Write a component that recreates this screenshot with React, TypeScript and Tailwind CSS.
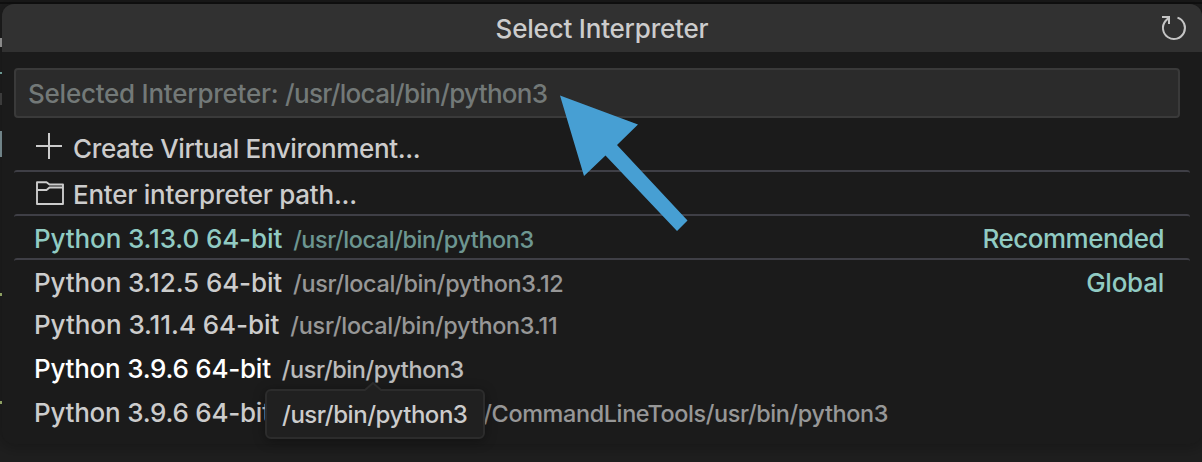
import { ReactNode } from "react";

type Item = {
  label: string;
  description?: string;
  icon?: ReactNode;
  tag?: string;
  tagClass?: string;
  separator?: boolean;
  rowClass: string;
  labelClass: string;
  descriptionClass?: string;
};

function PlusIcon() {
  return (
    <svg className="mr-[10px] h-[28px] w-[29px] shrink-0 overflow-visible" viewBox="0 0 29 28" fill="none" stroke="#cccccc" strokeWidth="2">
      <path d="M2 11h26M15 -2v26" />
    </svg>
  );
}

function FolderIcon() {
  return (
    <svg className="mr-[8px] h-[28px] w-[31px] shrink-0 overflow-visible" viewBox="0 0 31 28" fill="none" stroke="#cccccc" strokeWidth="1.9" strokeLinejoin="round">
      <path d="M3 1.300h9.500l3 2.200h13.500v19.500h-26z M3 9h9.500l3 -2.500h13.500" />
    </svg>
  );
}

function RefreshIcon() {
  return (
    <svg className="h-[28px] w-[28px]" viewBox="0 0 28 28" fill="none" stroke="#c5c5c5" strokeWidth="2">
      <path d="M17.500 3.600A11 11 0 1 1 5.500 7L9 3.500" />
      <path d="M2 3H9V10" />
    </svg>
  );
}

const items: Item[] = [
  { label: "Create Virtual Environment...", icon: <PlusIcon />, rowClass: "text-[#cccccc]", labelClass: "tracking-[-0.36px]" },
  { label: "Enter interpreter path...", icon: <FolderIcon />, separator: true, rowClass: "text-[#cccccc]", labelClass: "tracking-[-0.23px]" },
  {
    label: "Python 3.13.0 64-bit",
    description: "/usr/local/bin/python3",
    tag: "Recommended",
    tagClass: "tracking-[-0.5px]",
    separator: true,
    rowClass: "text-[#91cbc3]",
    labelClass: "tracking-[-0.12px]",
    descriptionClass: "tracking-[-0.41px]",
  },
  {
    label: "Python 3.12.5 64-bit",
    description: "/usr/local/bin/python3.12",
    tag: "Global",
    tagClass: "tracking-[-0.25px]",
    separator: true,
    rowClass: "text-[#cccccc]",
    labelClass: "tracking-[-0.12px]",
    descriptionClass: "tracking-[-0.32px]",
  },
  { label: "Python 3.11.4 64-bit", description: "/usr/local/bin/python3.11", rowClass: "text-[#cccccc]", labelClass: "tracking-[-0.06px]", descriptionClass: "tracking-[-0.26px]" },
  { label: "Python 3.9.6 64-bit", description: "/usr/bin/python3", rowClass: "text-white", labelClass: "tracking-[-0.24px]", descriptionClass: "tracking-[-0.37px]" },
  {
    label: "Python 3.9.6 64-bit",
    description: "/Library/Developer/CommandLineTools/usr/bin/python3",
    rowClass: "text-[#cccccc]",
    labelClass: "tracking-[-0.24px]",
    descriptionClass: "tracking-[-0.36px]",
  },
];

function Row({ item }: { item: Item }) {
  return (
    <li
      className={`flex h-11 items-center pr-[26px] pl-5 whitespace-nowrap ${item.rowClass} ${
        item.separator ? "rounded-[3px] border-t-2 border-[#3f3f46] pt-[4px]" : "pt-[2px]"
      }`}
    >
      {item.icon}
      <span className={item.labelClass}>{item.label}</span>
      {item.description && <span className={`ml-[11px] pt-px text-[23.4px] opacity-70 ${item.descriptionClass ?? ""}`}>{item.description}</span>}
      {item.tag && <span className={`ml-auto text-[#91cbc3] ${item.tagClass ?? ""}`}>{item.tag}</span>}
    </li>
  );
}

function EditorEdge() {
  return (
    <svg className="w-[2px] shrink-0" viewBox="0 4 2 458" preserveAspectRatio="xMinYMin">
      <rect y="38" width="2" height="9" fill="#a5a5a5" />
      <rect y="72" width="2" height="2" fill="#7fb5ae" />
      <rect y="93" width="2" height="12" fill="#484848" />
      <rect y="131" width="2" height="26" fill="#869da3" />
      <rect y="293" width="2" height="3" fill="#a9bf76" />
      <rect y="401" width="2" height="3" fill="#a9bf76" />
    </svg>
  );
}

export default function App() {
  return (
    <div className="relative flex h-[462px] w-[1202px] flex-col overflow-hidden bg-[#1f1f1f] font-[Inter,sans-serif] text-[26px] leading-[32px] font-[450]">
      <div className="h-1 shrink-0 border-b-2 border-[#111111] bg-[#1b1b1b]" />
      <main className="flex h-[458px]">
        <EditorEdge />
        <section className="h-[440px] w-[1200px] overflow-hidden rounded-[12px] bg-[#1b1b1b] shadow-[0_0_16px_4px_rgba(0,0,0,0.25)]">
          <header className="grid h-12 grid-cols-[42px_1fr_42px] items-center bg-[#313131] text-[#cccccc]">
            <h1 className="col-start-2 pt-[2px] text-center tracking-[-0.2px]">Select Interpreter</h1>
            <button aria-label="Refresh">
              <RefreshIcon />
            </button>
          </header>
          <div className="px-3 pt-4">
            <div className="flex h-[50px] w-[1166px] items-center rounded-[4px] border-2 border-[#3a3a3a] bg-[#2b2b2b] pl-3 text-[#737978]">
              <p className="pt-[2px] tracking-[-0.24px]">
                Selected Interpreter: <span className="tracking-[-0.69px]">/usr/local/bin/python3</span>
              </p>
            </div>
          </div>
          <ul className="mt-2 px-3">
            {items.map((item, index) => (
              <Row key={index} item={item} />
            ))}
          </ul>
        </section>
      </main>

      <div className="absolute top-[389px] left-[265px] flex h-[50px] w-[220px] items-center rounded-[6px] border-2 border-[#2c2c2c] bg-[#202020] pl-[15px] text-[24px] text-[#cccccc] shadow-[0_2px_12px_rgba(0,0,0,0.36)]">
        <span className="pt-[2px] tracking-[-0.47px]">/usr/bin/python3</span>
        <svg className="absolute -top-[9px] left-[97px] h-[10px] w-[18px]" viewBox="0 0 18 10">
          <path d="M1 9L9 1L17 9V10H1Z" fill="#202020" />
          <path d="M1 8L9 1L17 8" fill="none" stroke="#2c2c2c" strokeWidth="2" />
        </svg>
      </div>

      <svg className="absolute top-[94px] left-[558px] h-[140px] w-[132px]" viewBox="558 94 132 140">
        <path d="M560 95.500L638 124.500L617 145L687.500 220.500L677 231L605.500 155.500L584 176Z" fill="#479fd3" />
      </svg>
    </div>
  );
}
